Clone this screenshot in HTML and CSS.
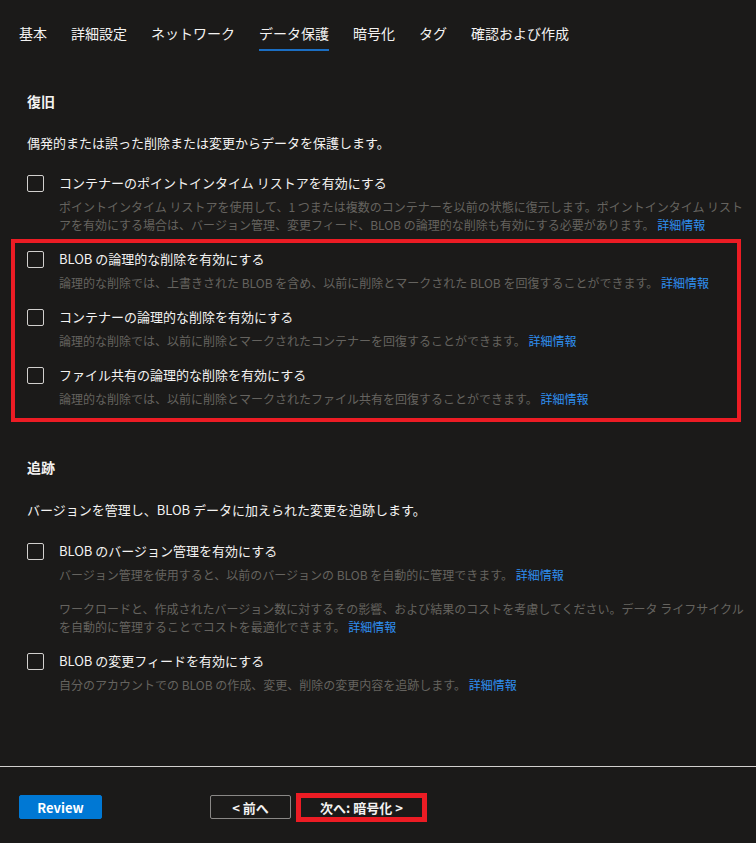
FILE: index.html
```html
<!DOCTYPE html>
<html lang="ja">
<head>
    <meta charset="UTF-8">
    <meta name="viewport" content="width=device-width, initial-scale=1.0">
    <title>ストレージ アカウントの作成 - データ保護</title>
    <link rel="stylesheet" href="styles.css">
</head>
<body>

    <nav class="tabs">
        <a class="tab" href="#">基本</a>
        <a class="tab" href="#">詳細設定</a>
        <a class="tab" href="#">ネットワーク</a>
        <a class="tab active" href="#">データ保護</a>
        <a class="tab" href="#">暗号化</a>
        <a class="tab" href="#">タグ</a>
        <a class="tab" href="#">確認および作成</a>
    </nav>

    <main class="content">
        <section class="section">
            <h2>復旧</h2>
            <p class="intro">偶発的または誤った削除または変更からデータを保護します。</p>

            <div class="option">
                <label class="check"><input type="checkbox">コンテナーのポイントインタイム リストアを有効にする</label>
                <p class="hint">ポイントインタイム リストアを使用して、1 つまたは複数のコンテナーを以前の状態に復元します。ポイントインタイム リストアを有効にする場合は、バージョン管理、変更フィード、BLOB の論理的な削除も有効にする必要があります。 <a href="#">詳細情報</a></p>
            </div>

            <div class="callout">
                <div class="option">
                    <label class="check"><input type="checkbox">BLOB の論理的な削除を有効にする</label>
                    <p class="hint">論理的な削除では、上書きされた BLOB を含め、以前に削除とマークされた BLOB を回復することができます。 <a href="#">詳細情報</a></p>
                </div>
                <div class="option">
                    <label class="check"><input type="checkbox">コンテナーの論理的な削除を有効にする</label>
                    <p class="hint">論理的な削除では、以前に削除とマークされたコンテナーを回復することができます。 <a href="#">詳細情報</a></p>
                </div>
                <div class="option">
                    <label class="check"><input type="checkbox">ファイル共有の論理的な削除を有効にする</label>
                    <p class="hint">論理的な削除では、以前に削除とマークされたファイル共有を回復することができます。 <a href="#">詳細情報</a></p>
                </div>
            </div>
        </section>

        <section class="section tracking">
            <h2>追跡</h2>
            <p class="intro">バージョンを管理し、BLOB データに加えられた変更を追跡します。</p>

            <div class="option">
                <label class="check"><input type="checkbox">BLOB のバージョン管理を有効にする</label>
                <p class="hint">バージョン管理を使用すると、以前のバージョンの BLOB を自動的に管理できます。 <a href="#">詳細情報</a></p>
                <p class="hint extra">ワークロードと、作成されたバージョン数に対するその影響、および結果のコストを考慮してください。データ ライフサイクルを自動的に管理することでコストを最適化できます。 <a href="#">詳細情報</a></p>
            </div>
            <div class="option">
                <label class="check"><input type="checkbox">BLOB の変更フィードを有効にする</label>
                <p class="hint">自分のアカウントでの BLOB の作成、変更、削除の変更内容を追跡します。 <a href="#">詳細情報</a></p>
            </div>
        </section>
    </main>

    <footer class="footer">
        <button type="button" class="btn primary">Review</button>
        <button type="button" class="btn prev">&lt; 前へ</button>
        <button type="button" class="btn next">次へ: 暗号化 &gt;</button>
    </footer>

</body>
</html>
```

FILE: styles.css
```css
body {
    margin: 0;
    height: 100vh;
    display: flex;
    flex-direction: column;
    background-color: #1b1a19;
    color: #f3f2f1;
    font-family: "Noto Sans CJK JP", "Noto Sans", sans-serif;
}
.tabs {
    display: flex;
    gap: 24px;
    padding: 23px 0 0 19px;
}
.tab {
    font-size: 14px;
    line-height: 20px;
    padding-bottom: 6px;
    border-bottom: 2px solid transparent;
    color: #f3f2f1;
    text-decoration: none;
}
.tab.active {
    border-bottom-color: #1b6ec2;
}
.content {
    flex: 1;
    padding: 0 8px 0 27px;
}
h2 {
    margin: 40px 0 0;
    font-size: 14px;
    font-weight: 700;
    line-height: 20px;
}
.tracking h2 {
    margin-top: 35px;
}
.intro {
    margin: 22px 0 0;
    font-size: 13px;
    line-height: 20px;
}
.tracking .intro {
    margin-top: 23px;
}
.option {
    margin-top: 15px;
}
.intro + .option {
    margin-top: 20px;
}
.tracking .intro + .option {
    margin-top: 21px;
}
.check {
    display: flex;
    align-items: center;
    gap: 15px;
    font-size: 13px;
    line-height: 20px;
}
.check input {
    appearance: none;
    width: 17px;
    height: 17px;
    margin: 0;
    border: 1px solid #d2d0ce;
    border-radius: 2px;
    background: transparent;
}
.hint {
    margin: 5px 0 0 32px;
    font-size: 12px;
    line-height: 18px;
    color: #65635f;
}
.hint.extra {
    margin-top: 16px;
}
.hint a {
    color: #2f8ff0;
    text-decoration: none;
}
.callout {
    margin: 5px 7px 0 -16px;
    padding: 6px 0 10px 12px;
    border: 4px solid #ec1c24;
}
.callout .option:first-child {
    margin-top: 0;
}
.footer {
    box-sizing: border-box;
    height: 77px;
    display: flex;
    align-items: center;
    padding: 0 19px 0;
    border-top: 1px solid #d2d0ce;
    padding-top: 4px;
}
.btn {
    box-sizing: border-box;
    height: 24px;
    padding: 0;
    border: 1px solid #8a8886;
    border-radius: 2px;
    background: transparent;
    color: #f3f2f1;
    font-family: "Noto Sans CJK JP", "Noto Sans", sans-serif;
    font-size: 13px;
    font-weight: 700;
    cursor: pointer;
}
.primary {
    width: 83px;
    background-color: #0078d4;
    border-color: #0078d4;
    color: white;
}
.prev {
    width: 81px;
    margin-left: 108px;
}
.next {
    width: 131px;
    height: 29px;
    margin-left: 5px;
    border: 5px solid #ec1c24;
    border-radius: 0;
}
```
